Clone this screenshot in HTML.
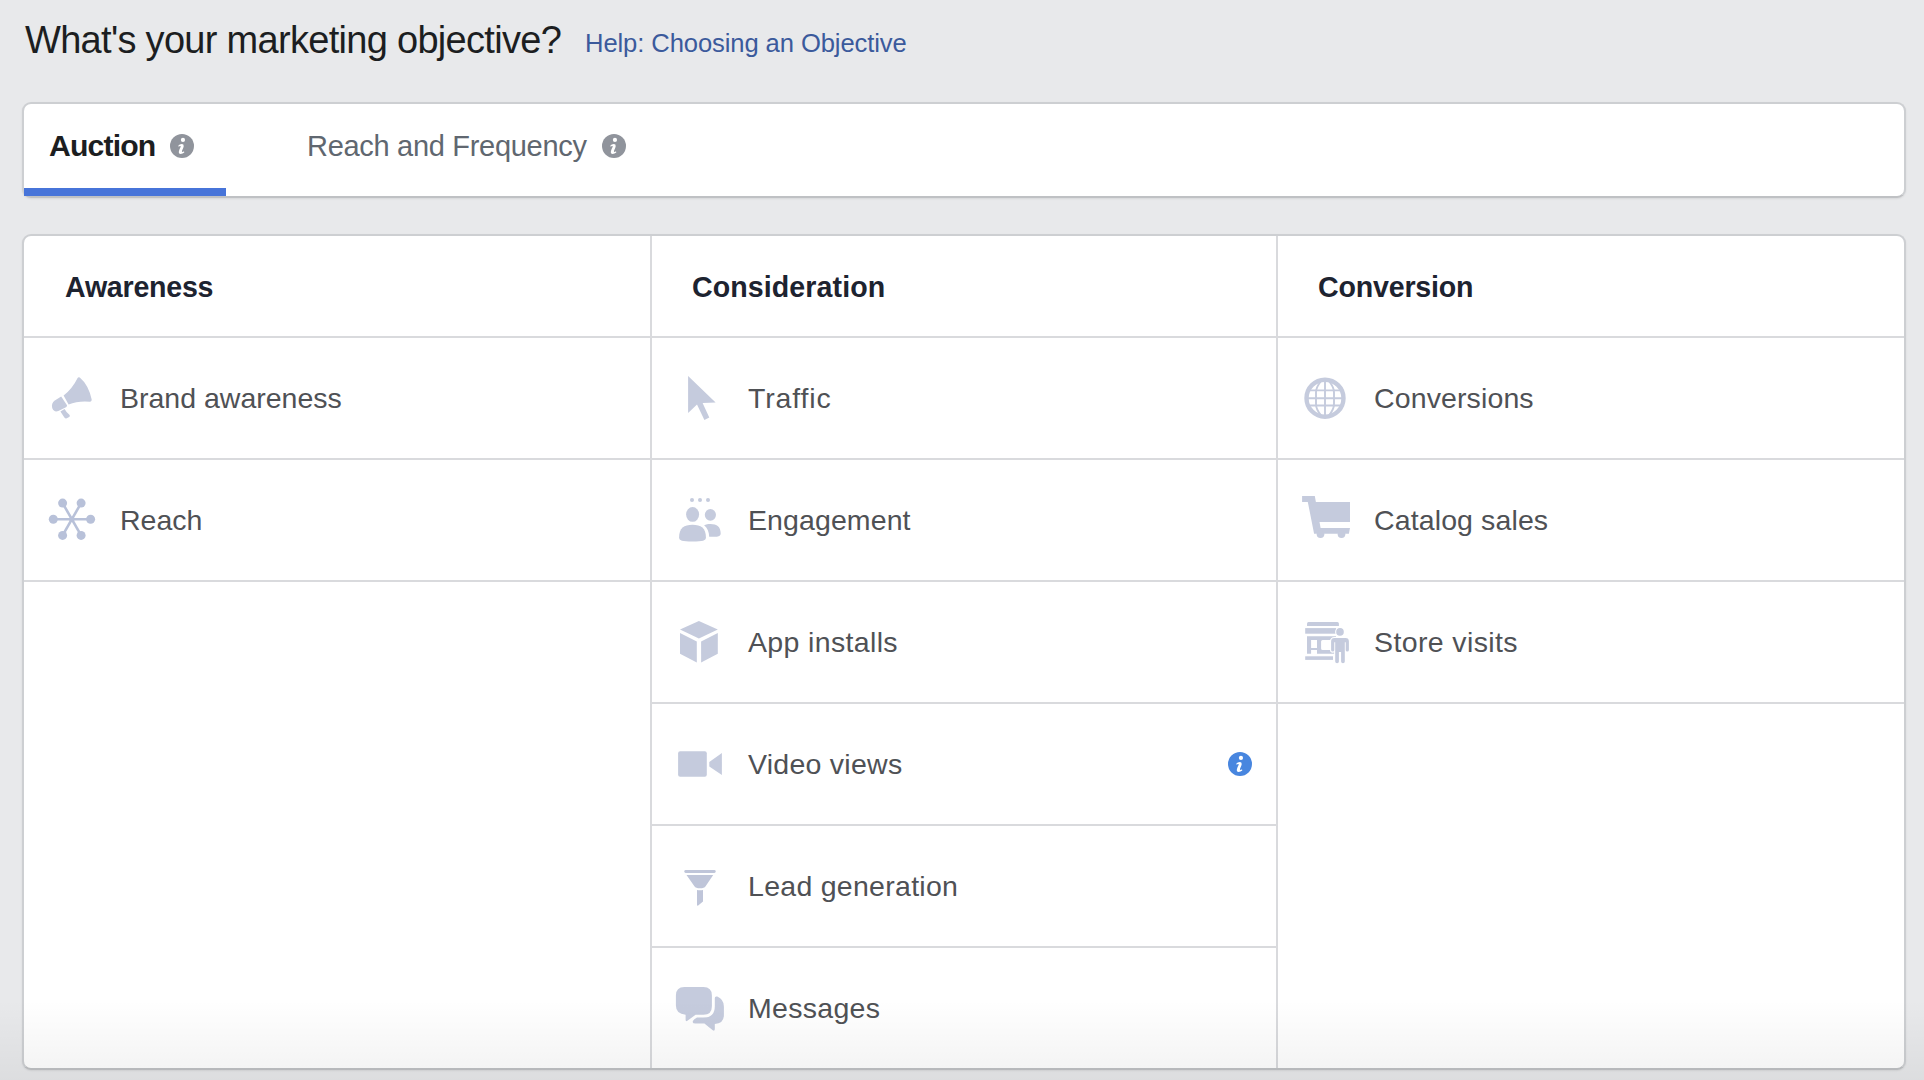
<!DOCTYPE html>
<html><head><meta charset="utf-8">
<style>
html,body{margin:0;padding:0;}
body{width:1924px;height:1080px;overflow:hidden;background:#e8e9eb;position:relative;font-family:"Liberation Sans",sans-serif;}
.t{position:absolute;white-space:nowrap;line-height:1;}
.card{position:absolute;background:#fff;box-sizing:border-box;}
#tabs{left:22px;top:102px;width:1884px;height:96px;border:2px solid #cdcfd2;border-bottom-color:#bfc1c4;border-radius:9px;box-shadow:0 1px 2px rgba(0,0,0,0.08);}
#grid{left:22px;top:234px;width:1884px;height:836px;border:2px solid #cdcfd2;border-bottom-color:#bfc1c4;border-radius:9px;box-shadow:0 1px 2px rgba(0,0,0,0.08);overflow:hidden;}
.hl{position:absolute;height:2px;background:#d9dadd;}
.vl{position:absolute;width:2px;background:#d9dadd;}
.ico{position:absolute;}
.h{font-weight:bold;color:#1d2330;font-size:28.6px;}
.it{color:#4f5155;font-size:28.5px;}
#fade{position:absolute;left:0;top:1000px;width:1924px;height:80px;background:linear-gradient(rgba(0,0,0,0),rgba(0,0,0,0.052));}
</style></head>
<body>
<div class="t" style="left:25px;top:21px;font-size:38px;color:#1c1e21;letter-spacing:-0.7px;">What's your marketing objective?</div>
<div class="t" style="left:585px;top:30.8px;font-size:25.6px;color:#3b5a9c;letter-spacing:-0.1px;">Help: Choosing an Objective</div>

<div id="tabs" class="card">
  <div style="position:absolute;left:0;top:84px;width:202px;height:8px;background:#4774d9;"></div>
</div>
<div class="t" style="left:49px;top:131px;font-size:30.2px;font-weight:bold;color:#1c1e21;letter-spacing:-0.85px;">Auction</div>
<svg class="ico" style="left:170px;top:134px" width="24" height="24" viewBox="0 0 24 24"><circle cx="12" cy="12" r="12" fill="#90949c"/><circle cx="12.95" cy="5.95" r="2.1" fill="#fff"/><path d="M8 11.9 Q9.6 10.2 11.8 10 Q14 10 13.7 12.3 Q13.4 14.2 12.1 16.6 Q11.6 18 12.4 18 Q13.2 17.9 14 17.3 L14.3 18.5 Q12.6 19.9 10.6 19.9 Q8.4 19.8 8.9 17.2 Q9.3 15.4 10.6 13.1 Q11 12.1 10.3 12.1 Q9.4 12.2 8.6 12.6 Z" fill="#fff"/></svg>
<div class="t" style="left:307px;top:132px;font-size:29px;color:#606770;letter-spacing:-0.3px;">Reach and Frequency</div>
<svg class="ico" style="left:602px;top:134px" width="24" height="24" viewBox="0 0 24 24"><circle cx="12" cy="12" r="12" fill="#90949c"/><circle cx="12.95" cy="5.95" r="2.1" fill="#fff"/><path d="M8 11.9 Q9.6 10.2 11.8 10 Q14 10 13.7 12.3 Q13.4 14.2 12.1 16.6 Q11.6 18 12.4 18 Q13.2 17.9 14 17.3 L14.3 18.5 Q12.6 19.9 10.6 19.9 Q8.4 19.8 8.9 17.2 Q9.3 15.4 10.6 13.1 Q11 12.1 10.3 12.1 Q9.4 12.2 8.6 12.6 Z" fill="#fff"/></svg>

<div id="grid" class="card"></div>
<!-- grid lines (absolute page coords) -->
<div class="hl" style="left:24px;top:336px;width:1880px;"></div>
<div class="hl" style="left:24px;top:458px;width:1880px;"></div>
<div class="hl" style="left:24px;top:580px;width:1880px;"></div>
<div class="hl" style="left:650px;top:702px;width:1254px;"></div>
<div class="hl" style="left:650px;top:824px;width:628px;"></div>
<div class="hl" style="left:650px;top:946px;width:628px;"></div>
<div class="vl" style="left:650px;top:236px;height:832px;"></div>
<div class="vl" style="left:1276px;top:236px;height:832px;"></div>

<div class="t h" style="left:65px;top:273px;letter-spacing:-0.25px;">Awareness</div>
<div class="t h" style="left:692px;top:273px;letter-spacing:0.08px;">Consideration</div>
<div class="t h" style="left:1318px;top:273px;letter-spacing:-0.2px;">Conversion</div>

<div class="t it" style="left:120px;top:384px;">Brand awareness</div>
<div class="t it" style="left:120px;top:506px;">Reach</div>
<div class="t it" style="left:748px;top:384px;letter-spacing:0.85px;">Traffic</div>
<div class="t it" style="left:748px;top:506px;letter-spacing:0.1px;">Engagement</div>
<div class="t it" style="left:748px;top:628px;letter-spacing:0.35px;">App installs</div>
<div class="t it" style="left:748px;top:750px;letter-spacing:0.26px;">Video views</div>
<div class="t it" style="left:748px;top:872px;letter-spacing:0.28px;">Lead generation</div>
<div class="t it" style="left:748px;top:994px;letter-spacing:0.3px;">Messages</div>
<div class="t it" style="left:1374px;top:384px;letter-spacing:0.12px;">Conversions</div>
<div class="t it" style="left:1374px;top:506px;letter-spacing:0.12px;">Catalog sales</div>
<div class="t it" style="left:1374px;top:628px;letter-spacing:0.38px;">Store visits</div>


<!-- icons -->
<svg class="ico" style="left:30px;top:360px" width="80" height="80" viewBox="0 0 80 80" fill="#c5cbdd">
<path d="M33.6 35.6 Q42.5 28.5 47.6 18 Q48.4 16.6 49.8 17.6 Q58.5 25 61.7 39.6 Q61.9 41.8 60 41.7 Q48 40.6 38.6 44.5 Z"/>
<path d="M31.2 36.6 L37 45.3 Q37.3 46.5 36 47.2 L28.3 51 Q24 52.6 22.2 48 Q21 43.3 24.8 40.6 Z"/>
<path d="M30.4 51.4 L34.6 49.1 Q36.6 53 39.4 54.7 Q40.6 55.9 39.2 57 L36.8 58.3 Q35.2 58.8 34.2 57.2 Z"/>
</svg>
<svg class="ico" style="left:30px;top:480px" width="80" height="80" viewBox="0 0 80 80" fill="#b8c1d9" stroke="#b8c1d9">
<g stroke-width="2.6"><line x1="23.3" y1="39.3" x2="60.6" y2="39.3"/><line x1="32.6" y1="23.1" x2="51.1" y2="55.4"/><line x1="51.1" y1="23.1" x2="32.6" y2="55.4"/></g>
<g stroke="none"><circle cx="41.85" cy="39.3" r="2.6"/><circle cx="23.3" cy="39.3" r="4.5"/><circle cx="60.6" cy="39.3" r="4.5"/><circle cx="32.6" cy="23.1" r="4.5"/><circle cx="51.1" cy="23.1" r="4.5"/><circle cx="32.6" cy="55.4" r="4.5"/><circle cx="51.1" cy="55.4" r="4.5"/></g>
</svg>
<svg class="ico" style="left:660px;top:360px" width="80" height="80" viewBox="0 0 80 80" fill="#c5cbdd">
<path d="M28.1 15.9 L55.6 42.6 L42.6 43 L49.3 57.4 L44.4 60 L37 44.4 L28.1 53 Z"/>
</svg>
<svg class="ico" style="left:660px;top:480px" width="80" height="80" viewBox="0 0 80 80" fill="#c5cbdd">
<circle cx="32" cy="20" r="2"/><circle cx="40" cy="20" r="2"/><circle cx="48" cy="20" r="2"/>
<ellipse cx="32.6" cy="34.4" rx="6.5" ry="7.4"/><ellipse cx="50.4" cy="34.8" rx="5.6" ry="5.9"/>
<path d="M19.1 57.5 C19.1 48 24 44.8 32.5 44.8 C41 44.8 45.9 48 45.9 57.5 C45.9 60.5 43 61.5 32.5 61.5 C22 61.5 19.1 60.5 19.1 57.5 Z"/>
<path d="M44.1 45.3 C46 44.5 48 44.1 50.4 44.1 C57 44.1 60.7 47 60.7 53.5 C60.7 56 58.5 56.7 56 56.7 L49.2 56.8 C49 52 47.5 47.8 44.1 45.3 Z"/>
</svg>
<svg class="ico" style="left:660px;top:600px" width="80" height="80" viewBox="0 0 80 80" fill="#c5cbdd">
<path d="M20 29.5 L38.9 21.1 L57.8 29.5 L38.9 38.5 Z"/>
<path d="M20 33 L36.8 41.5 L36.8 62.6 L20 53.7 Z"/>
<path d="M41.1 41.5 L57.8 33 L57.8 53.7 L41.1 62.6 Z"/>
</svg>
<svg class="ico" style="left:660px;top:724px" width="80" height="80" viewBox="0 0 80 80" fill="#c5cbdd">
<rect x="18.1" y="27.3" width="28.7" height="25.4" rx="2"/>
<path d="M49.3 38.1 L61.9 28.9 L61.9 51.1 L49.3 42.6 Z"/>
</svg>
<svg class="ico" style="left:660px;top:846px" width="80" height="80" viewBox="0 0 80 80" fill="#bfc5d9">
<rect x="24.3" y="24.1" width="31.4" height="2.8" rx="1.4"/>
<path d="M26.5 29 L53.2 29 L45.6 40.2 Q44.3 42.3 40 42.3 Q35.7 42.3 34.4 40.2 Z"/>
<path d="M37 44 Q40 44.6 43 44 L43 55.6 L38.2 59.6 Q37 60 37 58.8 Z"/>
</svg>
<svg class="ico" style="left:660px;top:968px" width="80" height="80" viewBox="0 0 80 80" fill="#c5cbdd">
<path d="M24.4 18.9 L43.4 18.9 Q51.9 18.9 51.9 27.4 L51.9 38.2 Q51.9 46.7 43.4 46.7 L35.6 46.7 L27.4 52.8 Q25.6 53.8 25.6 51.8 L25.6 46.7 Q15.9 46.2 15.9 37.6 L15.9 27.4 Q15.9 18.9 24.4 18.9 Z"/>
<path d="M54.8 30.2 Q54.8 27.8 57.3 28.6 Q63.9 31.5 63.9 38.5 L63.9 47 Q63.9 55.6 54.8 56 L54.8 61.3 Q54.6 63.4 52.8 62.3 L44.4 55.6 L35.5 55.6 Q32 55.6 32.9 53 Q33.8 51.5 37 49.6 L43.4 49.6 Q54.8 49.6 54.8 38.2 Z"/>
</svg>
<svg class="ico" style="left:1280px;top:360px" width="80" height="80" viewBox="0 0 80 80" fill="none" stroke="#c5cbdd">
<circle cx="45" cy="38.2" r="18.5" stroke-width="4.4"/>
<g stroke-width="1.9"><line x1="45" y1="20" x2="45" y2="56.5"/><line x1="27" y1="30.4" x2="63" y2="30.4"/><line x1="26.5" y1="38.2" x2="63.5" y2="38.2"/><line x1="27" y1="45.5" x2="63" y2="45.5"/>
<path d="M41.2 21 Q36 27 36 32.5 L36 44 Q36 49.5 41.2 55.5 M48.8 21 Q54 27 54 32.5 L54 44 Q54 49.5 48.8 55.5"/></g>
</svg>
<svg class="ico" style="left:1280px;top:480px" width="80" height="80" viewBox="0 0 80 80" fill="#c5cbdd">
<path d="M22.1 15.9 L34.8 15.9 L35.9 22.1 L70 22.1 L70 41.9 L39.5 41.9 L40.6 48.1 L70 48.1 L68.9 53.7 L34.1 53.7 L27.8 21.9 L22.1 21.9 Z"/>
<circle cx="40.5" cy="54.3" r="3.8"/><circle cx="61.5" cy="54.3" r="3.8"/>
</svg>
<svg class="ico" style="left:1280px;top:600px" width="80" height="80" viewBox="0 0 80 80" fill="#c5cbdd">
<path d="M28.5 22.1 L57.4 22.1 Q58.9 22.1 58.9 23.6 L58.9 25.9 L27 25.9 L27 23.6 Q27 22.1 28.5 22.1 Z"/>
<rect x="25.2" y="28.1" width="31" height="5.6"/>
<path fill-rule="evenodd" d="M27 36.3 L56 36.3 L56 53.7 L37 53.7 L37 50 L31.1 50 L31.1 53.7 L27 53.7 Z M31.1 40 L37 40 L37 48.1 L31.1 48.1 Z M42.6 40 L52 40 L52 50 L42.6 50 Q41.1 50 41.1 48.5 L41.1 41.5 Q41.1 40 42.6 40 Z"/>
<rect x="25.2" y="56.3" width="27.8" height="3.6"/>
<g stroke="#fff" stroke-width="2.2" paint-order="stroke">
<circle cx="60" cy="31.9" r="3.8"/>
<path d="M54.5 38.1 L65.5 38.1 Q68.9 38.1 68.9 41.5 L68.9 50 Q68.9 51.6 67.3 51.6 Q65.7 51.6 65.7 50 L65.7 42.3 L64.8 42.3 L64.8 61.6 Q64.8 63.3 63 63.3 Q61.1 63.3 61.1 61.6 L61.1 52 L58.9 52 L58.9 61.6 Q58.9 63.3 57.1 63.3 Q55.2 63.3 55.2 61.6 L55.2 42.3 L54.3 42.3 L54.3 50 Q54.3 51.6 52.7 51.6 Q51.1 51.6 51.1 50 L51.1 41.5 Q51.1 38.1 54.5 38.1 Z"/>
</g>
</svg>
<svg class="ico" style="left:1228px;top:752px" width="24" height="24" viewBox="0 0 24 24"><circle cx="12" cy="12" r="12" fill="#4886df"/><circle cx="12.95" cy="5.95" r="2.1" fill="#fff"/><path d="M8 11.9 Q9.6 10.2 11.8 10 Q14 10 13.7 12.3 Q13.4 14.2 12.1 16.6 Q11.6 18 12.4 18 Q13.2 17.9 14 17.3 L14.3 18.5 Q12.6 19.9 10.6 19.9 Q8.4 19.8 8.9 17.2 Q9.3 15.4 10.6 13.1 Q11 12.1 10.3 12.1 Q9.4 12.2 8.6 12.6 Z" fill="#fff"/></svg>

<div id="fade"></div>
</body></html>
